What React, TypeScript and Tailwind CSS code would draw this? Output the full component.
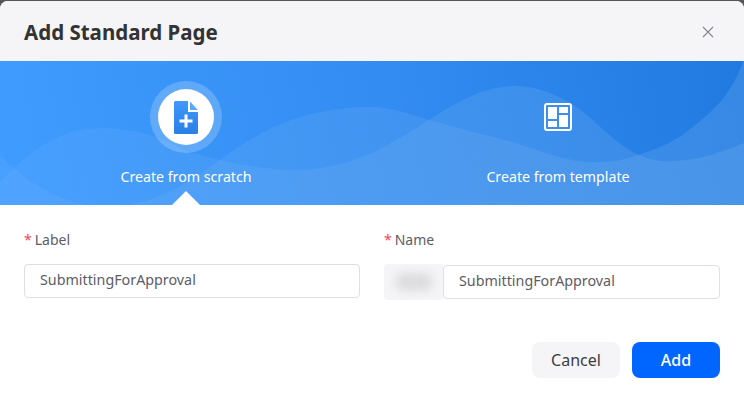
import React from "react";

const font = { fontFamily: '"Noto Sans", "Open Sans", sans-serif' };

function Waves() {
  return (
    <svg className="absolute inset-0" width="744" height="144" viewBox="0 0 744 144" fill="none">
      <defs>
        <linearGradient id="bg" x1="0" y1="144" x2="744" y2="0" gradientUnits="userSpaceOnUse">
          <stop offset="0" stopColor="#409cff" />
          <stop offset="0.5" stopColor="#338df2" />
          <stop offset="1" stopColor="#217ae0" />
        </linearGradient>
        <linearGradient id="wave" x1="0" y1="0" x2="744" y2="0" gradientUnits="userSpaceOnUse">
          <stop offset="0" stopColor="#8fc3fa" stopOpacity="0.1" />
          <stop offset="0.45" stopColor="#7ab4f0" stopOpacity="0.2" />
          <stop offset="1" stopColor="#7ab4f0" stopOpacity="0.25" />
        </linearGradient>
      </defs>
      <rect width="744" height="144" fill="url(#bg)" />
      <path
        d="M0 121C30 90 60 67 100 67C140 67 170 80 183 89C220 100 260 110 300 109C325 108 350 102 372 92C400 78 415 68 429 59C465 35 490 25 515 25C540 25 570 38 589 56C610 75 625 88 639 94C650 99 660 101 675 100C700 99 725 90 744 82V144H0Z"
        fill="url(#wave)"
      />
      <path
        d="M0 94C35 130 75 147 110 146C150 145 185 125 220 99C265 65 310 46 372 46C390 46 410 53 429 59C455 66 480 73 505 79C530 86 560 99 585 101C605 102 622 100 639 94C660 87 675 80 689 69C702 59 712 50 722 39C732 27 738 14 744 -1V146H0Z"
        fill="url(#wave)"
      />
    </svg>
  );
}

function FileIcon() {
  return (
    <svg width="24" height="33" viewBox="0 0 24 33" fill="none">
      <defs>
        <linearGradient id="fg" x1="12" y1="0" x2="12" y2="33" gradientUnits="userSpaceOnUse">
          <stop offset="0" stopColor="#3f98fb" />
          <stop offset="1" stopColor="#2a7fe6" />
        </linearGradient>
      </defs>
      <path d="M1.5 0H14V11H24V31.5A1.5 1.5 0 0 1 22.5 33H1.5A1.5 1.5 0 0 1 0 31.5V1.5A1.5 1.5 0 0 1 1.5 0Z" fill="url(#fg)" />
      <path d="M16 0.5L23.8 9H16Z" fill="#5aa7fb" />
      <path d="M10.5 13.5h3v5h5v3h-5v5h-3v-5h-5v-3h5Z" fill="#fff" />
    </svg>
  );
}

function TemplateIcon() {
  return (
    <svg width="28" height="28" viewBox="0 0 28 28" fill="none">
      <rect x="1" y="1" width="26" height="26" rx="2" stroke="#fff" strokeWidth="2" />
      <rect x="4" y="4" width="9" height="12" fill="#fff" />
      <rect x="15" y="4" width="9" height="6" fill="#fff" />
      <rect x="4" y="18" width="9" height="6" fill="#fff" />
      <rect x="15" y="12" width="9" height="12" fill="#fff" />
    </svg>
  );
}

function Field({ label, children }: { label: string; children: React.ReactNode }) {
  return (
    <div className="flex w-[336px] flex-col">
      <div className="flex h-[20px] items-center text-[14px] text-[#5c5c66]">
        <span className="mr-[3px] text-[#f5475b]">*</span>
        {label}
      </div>
      <div className="mt-[15px]">{children}</div>
    </div>
  );
}

export default function App() {
  return (
    <div className="h-[410px] w-[744px] overflow-hidden bg-[#565656] pt-px" style={font}>
      <div className="h-[409px] overflow-hidden rounded-t-[8px] bg-white">
        <header className="flex h-[60px] items-center justify-between bg-[#f5f5f7] pl-6 pr-[30px]">
          <h1 className="pt-px text-[20.5px] font-bold leading-[30px] text-[#333333]">Add Standard Page</h1>
          <svg width="12" height="12" viewBox="0 0 12 12" fill="none" className="mt-px">
            <path d="M1 1L11 11M11 1L1 11" stroke="#85858f" strokeWidth="1.1" />
          </svg>
        </header>

        <section className="relative h-[144px]">
          <Waves />
          <div className="relative grid h-full grid-cols-2">
            <div className="relative flex flex-col items-center pt-[20px]">
              <div className="flex size-[72px] items-center justify-center rounded-full bg-white/20">
                <div className="flex size-[56px] items-center justify-center rounded-full bg-white">
                  <FileIcon />
                </div>
              </div>
              <div className="mt-[13px] text-[14.2px] text-white">Create from scratch</div>
              <div className="absolute bottom-0 left-1/2 size-0 -translate-x-1/2 border-x-[14px] border-b-[14px] border-x-transparent border-b-white" />
            </div>
            <div className="flex flex-col items-center pt-[20px]">
              <div className="flex size-[72px] items-center justify-center">
                <TemplateIcon />
              </div>
              <div className="mt-[13px] text-[14.2px] text-white">Create from template</div>
            </div>
          </div>
        </section>

        <section className="flex justify-between px-6 pt-6">
          <Field label="Label">
            <div className="flex h-[34px] items-center rounded-[4px] border border-[#dedee6] bg-white pb-[2px] pl-[15px] text-[14.3px] text-[#5c5c66]">
              SubmittingForApproval
            </div>
          </Field>
          <Field label="Name">
            <div className="flex h-[36px] items-center">
              <div className="flex h-[36px] w-[59px] items-center justify-center overflow-hidden rounded-l-[4px] bg-[#f5f5f7]">
                <div className="h-[18px] w-[36px] rounded-[6px] bg-[#dcdcde] blur-[5px]" />
              </div>
              <div className="flex h-[34px] flex-1 items-center rounded-[4px] border border-[#dedee6] bg-white pb-[2px] pl-[15px] text-[14.3px] text-[#5c5c66]">
                SubmittingForApproval
              </div>
            </div>
          </Field>
        </section>

        <footer className="mt-[42px] flex justify-end gap-3 px-6">
          <button className="h-[36px] w-[88px] rounded-[8px] bg-[#f5f5f7] pb-px text-[16px] text-[#3d3d45]">Cancel</button>
          <button className="h-[36px] w-[88px] rounded-[8px] bg-[#0066ff] pb-px text-[16px] font-medium text-white">Add</button>
        </footer>
      </div>
    </div>
  );
}
